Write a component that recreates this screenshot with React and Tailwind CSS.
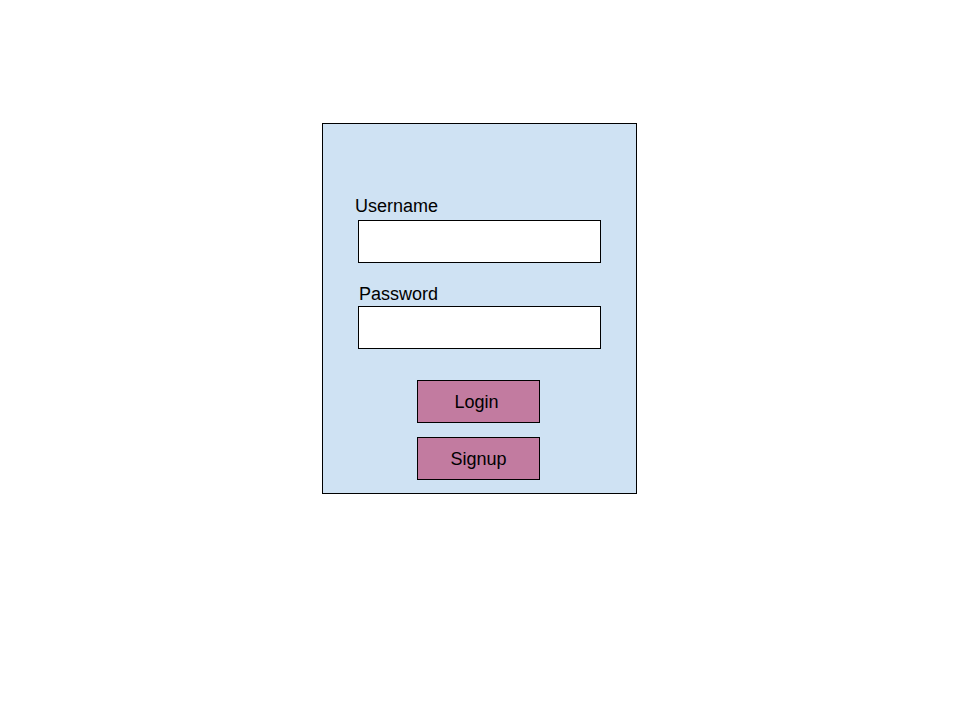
export default function App() {
  return (
    <div className="w-[960px] h-[718px] bg-white pt-[123px] pl-[322px]" style={{ fontFamily: '"Liberation Sans", Arial, sans-serif' }}>
      <div className="w-[315px] h-[371px] border border-black bg-[#cfe2f3] flex flex-col items-start text-black text-[18px] leading-[20px]">
        <div className="ml-[32px] mt-[72px] h-[20px]">Username</div>
        <div className="ml-[35px] mt-[4px] w-[243px] h-[43px] border border-black bg-white" />
        <div className="ml-[36px] mt-[21px] h-[20px]">Password</div>
        <div className="ml-[35px] mt-[2px] w-[243px] h-[43px] border border-black bg-white" />
        <div className="ml-[94px] mt-[31px] w-[123px] h-[43px] border border-black bg-[#c27ba0] flex items-center justify-center pr-[4px]">Login</div>
        <div className="ml-[94px] mt-[14px] w-[123px] h-[43px] border border-black bg-[#c27ba0] flex items-center justify-center">Signup</div>
      </div>
    </div>
  );
}
